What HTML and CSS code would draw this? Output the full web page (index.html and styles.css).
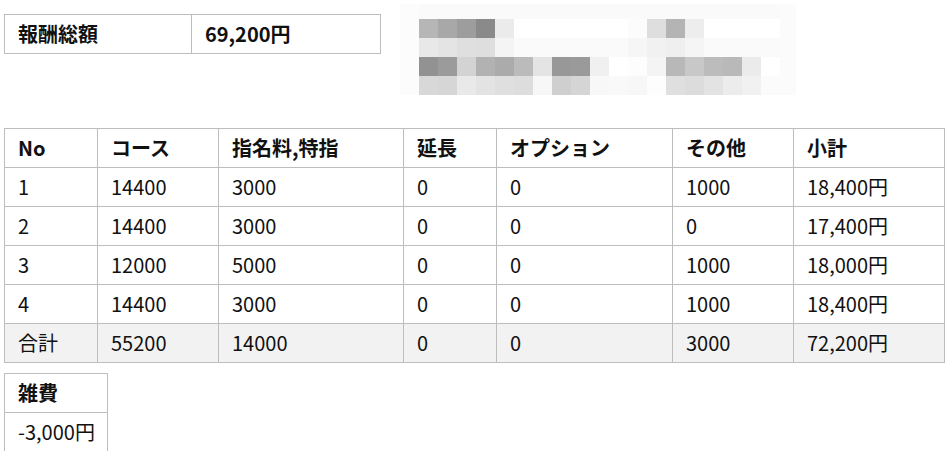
FILE: index.html
```html
<!DOCTYPE html>
<html lang="ja">
<head>
<meta charset="utf-8">
<link rel="stylesheet" href="styles.css">
</head>
<body>
<div class="top">
  <table class="tbl total">
    <colgroup><col class="c-a"><col class="c-b"></colgroup>
    <tr><th>報酬総額</th><td class="amount">69,200円</td></tr>
  </table>
  <svg class="blur" width="396" height="91" viewBox="0 0 396 91" shape-rendering="crispEdges">
    <rect x="0" y="0" width="396" height="91" fill="#fafafa"/>
    <rect x="0" y="0" width="19" height="91" fill="#fcfcfc"/>
    <rect x="380" y="0" width="16" height="91" fill="#fbfbfb"/>
    <!-- row 1 -->
    <rect x="19" y="15" width="19" height="19" fill="#b6b6b6"/>
    <rect x="38" y="15" width="19" height="19" fill="#a8a8a8"/>
    <rect x="57" y="15" width="19" height="19" fill="#9d9d9d"/>
    <rect x="76" y="15" width="19" height="19" fill="#8a8a8a"/>
    <rect x="95" y="15" width="19" height="19" fill="#ebebeb"/>
    <rect x="114" y="15" width="114" height="19" fill="#ffffff"/>
    <rect x="228" y="15" width="19" height="19" fill="#fcfcfc"/>
    <rect x="247" y="15" width="19" height="19" fill="#dedede"/>
    <rect x="266" y="15" width="19" height="19" fill="#b4b4b4"/>
    <rect x="285" y="15" width="19" height="19" fill="#ededed"/>
    <rect x="304" y="15" width="76" height="19" fill="#ffffff"/>
    <!-- row 2 -->
    <rect x="19" y="34" width="19" height="19" fill="#e8e8e8"/>
    <rect x="38" y="34" width="19" height="19" fill="#e4e4e4"/>
    <rect x="57" y="34" width="19" height="19" fill="#dfdfdf"/>
    <rect x="76" y="34" width="19" height="19" fill="#dedede"/>
    <rect x="95" y="34" width="19" height="19" fill="#f4f4f4"/>
    <rect x="228" y="34" width="19" height="19" fill="#f6f6f6"/>
    <rect x="247" y="34" width="19" height="19" fill="#f1f1f1"/>
    <rect x="266" y="34" width="19" height="19" fill="#efefef"/>
    <rect x="285" y="34" width="19" height="19" fill="#f5f5f5"/>
    <!-- row 3 -->
    <rect x="19" y="53" width="19" height="19" fill="#929292"/>
    <rect x="38" y="53" width="19" height="19" fill="#9b9b9b"/>
    <rect x="57" y="53" width="19" height="19" fill="#d3d3d3"/>
    <rect x="76" y="53" width="19" height="19" fill="#b2b2b2"/>
    <rect x="95" y="53" width="19" height="19" fill="#ababab"/>
    <rect x="114" y="53" width="19" height="19" fill="#bbbbbb"/>
    <rect x="133" y="53" width="19" height="19" fill="#e4e4e4"/>
    <rect x="152" y="53" width="19" height="19" fill="#989898"/>
    <rect x="171" y="53" width="19" height="19" fill="#9a9a9a"/>
    <rect x="190" y="53" width="19" height="19" fill="#f0f0f0"/>
    <rect x="209" y="53" width="19" height="19" fill="#ffffff"/>
    <rect x="228" y="53" width="19" height="19" fill="#fdfdfd"/>
    <rect x="247" y="53" width="19" height="19" fill="#f4f4f4"/>
    <rect x="266" y="53" width="19" height="19" fill="#b8b8b8"/>
    <rect x="285" y="53" width="19" height="19" fill="#c8c8c8"/>
    <rect x="304" y="53" width="19" height="19" fill="#bcbcbc"/>
    <rect x="323" y="53" width="19" height="19" fill="#b9b9b9"/>
    <rect x="342" y="53" width="19" height="19" fill="#ebebeb"/>
    <rect x="361" y="53" width="19" height="19" fill="#ffffff"/>
    <!-- row 4 -->
    <rect x="19" y="72" width="19" height="19" fill="#d8d8d8"/>
    <rect x="38" y="72" width="19" height="19" fill="#d6d6d6"/>
    <rect x="57" y="72" width="19" height="19" fill="#e9e9e9"/>
    <rect x="76" y="72" width="19" height="19" fill="#e3e3e3"/>
    <rect x="95" y="72" width="19" height="19" fill="#dfdfdf"/>
    <rect x="114" y="72" width="19" height="19" fill="#dddddd"/>
    <rect x="133" y="72" width="19" height="19" fill="#f7f7f7"/>
    <rect x="152" y="72" width="19" height="19" fill="#cfcfcf"/>
    <rect x="171" y="72" width="19" height="19" fill="#d5d5d5"/>
    <rect x="190" y="72" width="19" height="19" fill="#f8f8f8"/>
    <rect x="209" y="72" width="19" height="19" fill="#f9f9f9"/>
    <rect x="228" y="72" width="19" height="19" fill="#f7f7f7"/>
    <rect x="247" y="72" width="19" height="19" fill="#fdfdfd"/>
    <rect x="266" y="72" width="19" height="19" fill="#dfdfdf"/>
    <rect x="285" y="72" width="19" height="19" fill="#dcdcdc"/>
    <rect x="304" y="72" width="19" height="19" fill="#e3e3e3"/>
    <rect x="323" y="72" width="19" height="19" fill="#ececec"/>
    <rect x="342" y="72" width="19" height="19" fill="#f1f1f1"/>
    <rect x="361" y="72" width="19" height="19" fill="#fbfbfb"/>
  </svg>
</div>

<table class="tbl detail">
  <colgroup>
    <col class="d1"><col class="d2"><col class="d3"><col class="d4"><col class="d5"><col class="d6"><col class="d7">
  </colgroup>
  <thead>
    <tr><th>No</th><th>コース</th><th>指名料,特指</th><th>延長</th><th>オプション</th><th>その他</th><th>小計</th></tr>
  </thead>
  <tbody>
    <tr><td>1</td><td>14400</td><td>3000</td><td>0</td><td>0</td><td>1000</td><td>18,400円</td></tr>
    <tr><td>2</td><td>14400</td><td>3000</td><td>0</td><td>0</td><td>0</td><td>17,400円</td></tr>
    <tr><td>3</td><td>12000</td><td>5000</td><td>0</td><td>0</td><td>1000</td><td>18,000円</td></tr>
    <tr><td>4</td><td>14400</td><td>3000</td><td>0</td><td>0</td><td>1000</td><td>18,400円</td></tr>
    <tr class="sum"><td>合計</td><td>55200</td><td>14000</td><td>0</td><td>0</td><td>3000</td><td>72,200円</td></tr>
  </tbody>
</table>

<table class="tbl misc">
  <tr><th>雑費</th></tr>
  <tr><td>-3,000円</td></tr>
</table>
</body>
</html>
```

FILE: styles.css
```css
html, body {
  margin: 0;
  padding: 0;
  background: #fff;
}
body {
  padding: 4px;
  font-family: "Noto Sans CJK JP", "Noto Sans", sans-serif;
  font-size: 20px;
  color: #111;
}
.top {
  display: flex;
  align-items: flex-start;
  gap: 19px;
}
.blur {
  display: block;
  flex: none;
}
.tbl {
  border-collapse: collapse;
  table-layout: fixed;
}
.tbl th,
.tbl td {
  border: 1px solid #bdbdbd;
  height: 39px;
  box-sizing: border-box;
  padding: 0 13px;
  text-align: left;
  vertical-align: middle;
  line-height: 1.4;
  white-space: nowrap;
}
.tbl th {
  font-weight: 700;
}
.total {
  margin-top: 10px;
  width: 376px;
}
.total .amount {
  font-weight: 700;
}
.c-a { width: 187px; }
.c-b { width: 189px; }
.detail {
  margin-top: 33px;
  width: 940px;
}
.d1 { width: 93px; }
.d2 { width: 121px; }
.d3 { width: 185px; }
.d4 { width: 93px; }
.d5 { width: 176px; }
.d6 { width: 121px; }
.d7 { width: 151px; }
.sum td {
  background: #f2f2f2;
}
.misc {
  margin-top: 10px;
  width: 104px;
}
```
